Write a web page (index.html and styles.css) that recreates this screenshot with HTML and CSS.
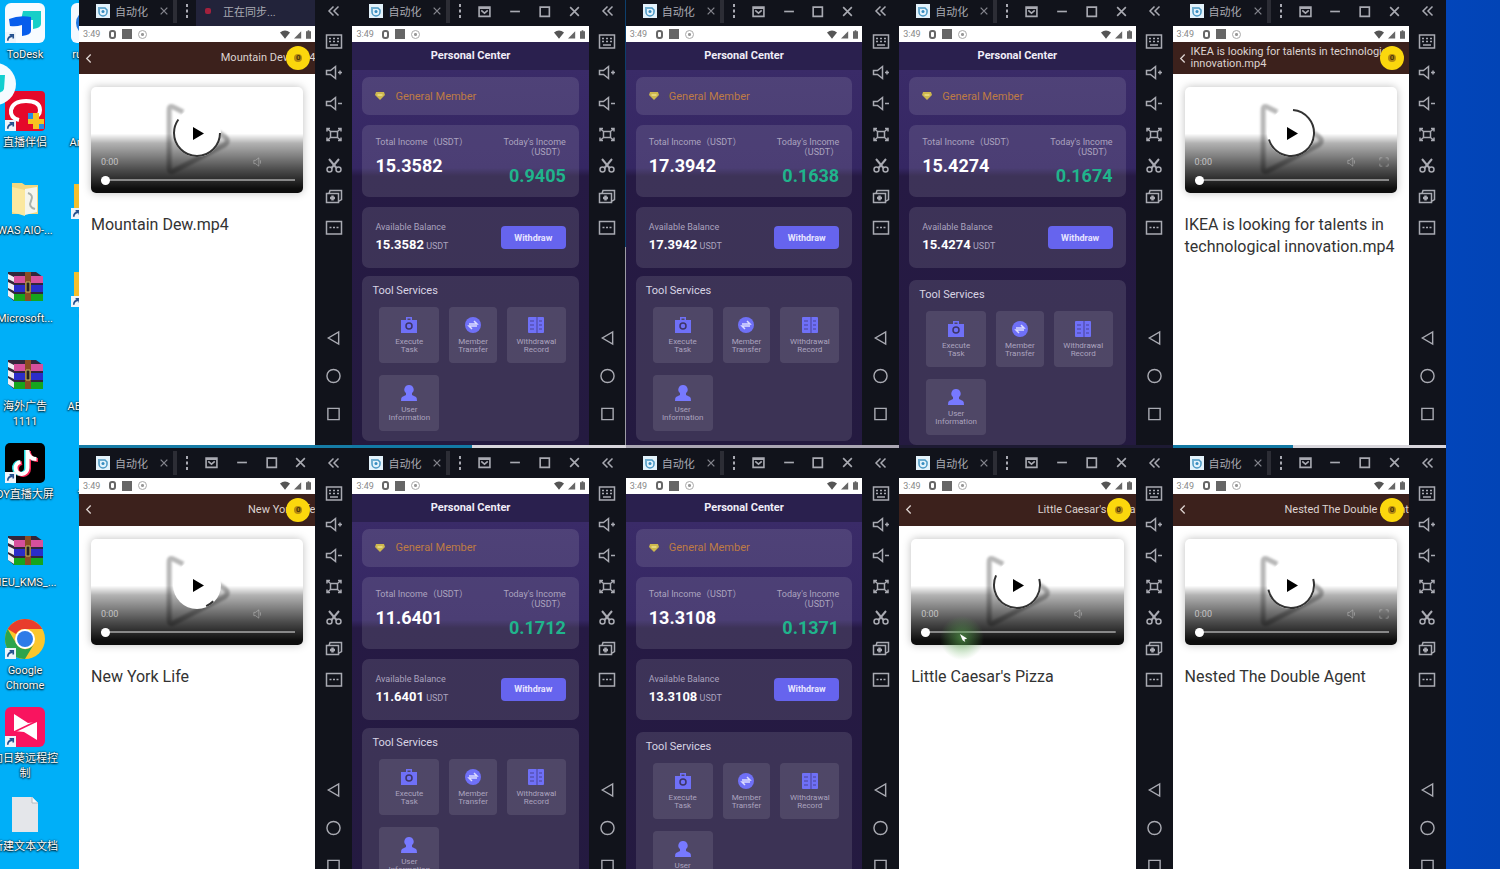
FILE: index.html
```
<!DOCTYPE html>
<html lang="en">
	<head>
		<meta charset="utf-8">
		<meta name="viewport" content="width=device-width, initial-scale=1.0">
		<title>Desktop</title>
		<link rel="stylesheet" href="styles.css">
	</head>
	<body>
		<svg class="sprite" aria-hidden="true">
			<symbol id="i-app" viewBox="0 0 14 14"><rect width="14" height="14" fill="#e3f2fb"/><path d="M4 4h5l2 2v2a4 4 0 0 1-8 0V3" fill="none" stroke="#4a98c4" stroke-width="1.500"/><circle cx="7" cy="7.500" r="1.500" fill="#358cc0"/></symbol>
			<symbol id="i-x" viewBox="0 0 12 12"><path d="M2 2l8 8M10 2l-8 8"/></symbol>
			<symbol id="i-dots" viewBox="0 0 12 16"><path d="M6 1v3M6 6.500v3M6 12v3" stroke-width="2"/></symbol>
			<symbol id="i-mail" viewBox="0 0 12 12"><path d="M1 2h10v8.500H1zM3 5l3 2.500L9 5M1 3h10"/></symbol>
			<symbol id="i-min" viewBox="0 0 12 12"><path d="M2 6h9"/></symbol>
			<symbol id="i-max" viewBox="0 0 12 12"><path d="M2 2h8.500v8.500H2z"/></symbol>
			<symbol id="i-fold" viewBox="0 0 12 12"><path d="M6 1.500L1.500 6 6 10.500M11 1.500L6.500 6l4.500 4.500"/></symbol>
			<symbol id="i-keys" viewBox="0 0 18 16"><path d="M1.500 1.500h15v13h-15zM4 5h2M8 5h2M12 5h2M4 8h2M8 8h2M12 8h2M5 11.500h8"/></symbol>
			<symbol id="i-volup" viewBox="0 0 18 16"><path d="M1.500 6h4l5-4v12l-5-4h-4zM13 8h4M15 6v4"/></symbol>
			<symbol id="i-voldn" viewBox="0 0 18 16"><path d="M1.500 6h4l5-4v12l-5-4h-4zM13 8h4"/></symbol>
			<symbol id="i-full" viewBox="0 0 18 16"><path d="M5.500 5h7v6h-7zM5.500 5L2 2M12.500 5L16 2M5.500 11L2 14M12.500 11l3.500 3M2 5V2h3M13 2h3v3M2 11v3h3M13 14h3v-3"/></symbol>
			<symbol id="i-cut" viewBox="0 0 18 16"><path d="M4 1.500l7.500 9M14 1.500l-7.500 9" stroke-width="2"/><circle cx="4.500" cy="12" r="2.500"/><circle cx="13.500" cy="12" r="2.500"/></symbol>
			<symbol id="i-apk" viewBox="0 0 18 16"><path d="M1.500 5h12v9h-12zM4 5l1-3h11.500v9l-3 2"/><path d="M7.500 7v5M5 9.500h5" stroke-width="2.500"/></symbol>
			<symbol id="i-more" viewBox="0 0 18 16"><path d="M1.500 2h15v12.500h-15zM4.500 8h2M8 8h2M11.500 8h2"/></symbol>
			<symbol id="i-back" viewBox="0 0 16 16"><path d="M13.500 1.500v13L2.500 8z"/></symbol>
			<symbol id="i-home" viewBox="0 0 16 16"><circle cx="8" cy="8" r="7"/></symbol>
			<symbol id="i-recent" viewBox="0 0 16 16"><path d="M2 2h12v12H2z"/></symbol>
			<symbol id="i-left" viewBox="0 0 8 12"><path d="M6.500 1.500L2 6l4.500 4.500"/></symbol>
			<symbol id="i-task" viewBox="0 0 18 18"><path d="M6 1h6v3h5v13H1V4h5zM7.500 2.500V4h3V2.500z" fill="#6f70f7"/><circle cx="9" cy="10" r="3" fill="none" stroke="#3d3566" stroke-width="1.500"/></symbol>
			<symbol id="i-transfer" viewBox="0 0 18 18"><circle cx="9" cy="9" r="8" fill="#6f70f7"/><path d="M5 8h8l-3-3M13 10H5l3 3" fill="none" stroke="#dcdcff" stroke-width="1.500"/></symbol>
			<symbol id="i-record" viewBox="0 0 18 18"><rect x="1" y="1" width="16" height="16" rx="1" fill="#6f70f7"/><path d="M10 1v16M3 5h4M3 9h4M3 13h4M12 5h3M12 9h3M12 13h3" stroke="#4a4395"/></symbol>
			<symbol id="i-user" viewBox="0 0 18 18"><path d="M9 1a4.500 4.500 0 0 1 3 8v2l4 2q1 .5 1 4H1q0-3.500 1-4l4-2V9a4.500 4.500 0 0 1 3-8z" fill="#7779ff"/></symbol>
			<symbol id="i-gem" viewBox="0 0 10 8"><path d="M1 0h8l1 3-5 5-5-5z" fill="#cdb84e"/><path d="M2.500 3h5" stroke="#fff3a8"/></symbol>
			<symbol id="i-wifi" viewBox="0 0 12 10"><path d="M0 2.500Q6-2 12 2.500L6 10z" fill="#555"/></symbol>
			<symbol id="i-signal" viewBox="0 0 10 10"><path d="M9 1v9H0z" fill="#666"/></symbol>
			<symbol id="i-battery" viewBox="0 0 6 10"><path d="M2 0h2v1h2v9H0V1h2z" fill="#666"/></symbol>
			<symbol id="i-shortcut" viewBox="0 0 12 12"><rect width="12" height="12" fill="#eef4fa"/><path d="M3 9.500Q3 5 8 4.500M5 3h4v4" fill="none" stroke="#24508e" stroke-width="1.800"/></symbol>
			<symbol id="d-todesk" viewBox="0 0 40 40"><rect width="40" height="40" rx="6" fill="#f7fbff"/><path d="M18 8h18v13q0 4-8 5V17H16z" fill="#18cfc8"/><path d="M4 16q10-4 22-2v14q0 4-9 5V22q-6 2-12 1z" fill="#075dec"/></symbol>
			<symbol id="d-live" viewBox="0 0 40 40"><rect width="40" height="40" rx="4" fill="#e5092a"/><path d="M14 29q-9-2-8-10 2-9 15-9 14 0 14 9 0 7-7 6" fill="none" stroke="#fff" stroke-width="4"/><path d="M28 22h6v6h5v5h-5v5h-6v-5h-5v-5h5z" fill="#f8c321"/><path d="M23 22h5v6h-5zM34 33h5v5h-5z" fill="#258fe6"/></symbol>
			<symbol id="d-folder" viewBox="0 0 40 40"><path d="M7 4h10l3 2h13v29H7z" fill="#f2d880"/><path d="M20 10l12-2v25l-12 3z" fill="#f5f5ee"/><path d="M7 8l13 3v26L7 33z" fill="#fbe8a0"/><path d="M23 14q6 2 3 8t4 8" fill="none" stroke="#aab1ac" stroke-width="2"/></symbol>
			<symbol id="d-yellow" viewBox="0 0 40 40"><path d="M3 5h15l3 4h16v26H3z" fill="#f5bf2d"/><path d="M8 9h29v26H8z" fill="#ffdc73"/></symbol>
			<symbol id="d-rar" viewBox="0 0 40 40"><path d="M3 5h28l7 5v24H9L3 29z" fill="#33263a"/><path d="M9 9h29v7H9z" fill="#d6509c"/><path d="M9 18h29v7H9z" fill="#2b2dc8"/><path d="M9 27h29v7H9z" fill="#16a51e"/><path d="M3 7l6 3v5l-6-3zM3 15l6 3v6l-6-3zM3 23l6 4v6l-6-4z" fill="#f0eef2"/><path d="M20 5h6v29h-6z" fill="#8b4d24"/><path d="M21 15h4v10h-4z" fill="#262022" stroke="#c9b65c"/></symbol>
			<symbol id="d-tiktok" viewBox="0 0 40 40"><rect width="40" height="40" rx="5"/><g fill="none" stroke-width="4"><path d="M21 7v18a6 6 0 1 1-7-6M21 9q2 7 9 7" stroke="#22dfe0"/><path d="M24 8v18a6 6 0 1 1-7-6M24 10q2 7 9 7" stroke="#fb2553"/><path d="M22.500 7v18a6 6 0 1 1-7-6M22.500 9q2 7 9 7" stroke="#fff"/></g></symbol>
			<symbol id="d-chrome" viewBox="0 0 40 40"><circle cx="20" cy="20" r="20" fill="#fbc62c"/><path d="M2.700 10A20 20 0 0 1 37.300 10H20a10 10 0 0 0-9 5z" fill="#e83c2c"/><path d="M2.700 10A20 20 0 0 0 20 40l9-15a10 10 0 0 1-17.500 0z" fill="#2da44c"/><circle cx="20" cy="20" r="10" fill="#fff"/><circle cx="20" cy="20" r="8" fill="#2d7be8"/></symbol>
			<symbol id="d-sun" viewBox="0 0 40 40"><rect width="40" height="40" rx="6" fill="#f9145f"/><path d="M9 7l14 9 9-1v18l-13-8-10-1z" fill="#fff"/><path d="M9 25l23-11" stroke="#f9145f" stroke-width="1.500"/></symbol>
			<symbol id="d-file" viewBox="0 0 40 40"><path d="M7 2h20l6 6v29H7z" fill="#e4e6ea"/><path d="M27 2v6h6" fill="#f9f9fb" stroke="#b6bac0"/></symbol>
			<symbol id="d-white" viewBox="0 0 40 40"><rect width="40" height="40" rx="6" fill="#f4f9ff"/><circle cx="18" cy="20" r="13" fill="#2278e0"/></symbol>
			<symbol id="d-none" viewBox="0 0 40 40"></symbol>
		</svg>

		<main class="desktop">
			<nav class="shortcuts" id="shortcuts" aria-label="Desktop icons"></nav>
			<div class="windows" id="windows"></div>
		</main>
		<svg class="bubble" viewBox="0 0 42 42" aria-hidden="true">
			<circle cx="21" cy="21" r="21" fill="#f4fbff"/>
			<path d="M12 12h19l-1 14q-1 4-8 4V20H12z" fill="#12cfd0"/>
		</svg>

		<script>
			// Desktop shortcuts: icon, label, has arrow badge
			const shortcuts = [
				["todesk", "ToDesk", 1], ["white", "runtime", 0],
				["live", "直播伴侣", 1], ["none", "AnyDesk", 0],
				["folder", "WAS AIO-...", 0], ["yellow", "BAK", 1],
				["rar", "Microsoft...", 0], ["yellow", "雷电", 1],
				["rar", "海外广告<br>1111", 0], ["none", "AB微信号", 0],
				["tiktok", "DY直播大屏", 1], ["none", "10-20", 0],
				["rar", "HEU_KMS_...", 0], ["none", "秒杀", 0],
				["chrome", "Google<br>Chrome", 1], ["none", "", 0],
				["sun", "向日葵远程控<br>制", 1], ["none", "", 0],
				["file", "新建文本文档", 0], ["none", "", 0]
			];

			// Emulator windows, row by row. arc = [start angle, length in %]
			const windows = [
				{ video: "Mountain Dew.mp4", arc: [0, 60], edge: "teal", sync: true },
				{ total: "15.3582", today: "0.9405", edge: "half", rule: true },
				{ total: "17.3942", today: "0.1638", edge: "grey" },
				{ total: "15.4274", today: "0.1674", edge: "dark", loose: true },
				{ video: "IKEA is looking for talents in technological innovation.mp4", arc: [-85, 69], edge: "half", full: true },
				{ video: "New York Life", arc: [45, 6], edge: "dark" },
				{ total: "11.6401", today: "0.1712", edge: "dark" },
				{ total: "13.3108", today: "0.1371", edge: "dark", loose: true },
				{ video: "Little Caesar's Pizza", arc: [-15, 61], edge: "dark", click: true },
				{ video: "Nested The Double Agent", arc: [-15, 51], edge: "dark", full: true }
			];

			const icon = (id, cls) => `<svg class="${cls}"><use href="#${id}"/></svg>`;
			const iconButton = (id, label, cls) => `<button class="${cls}" aria-label="${label}">${icon(id, "glyph")}</button>`;

			const videoScreen = (w) => `
				<header class="video-bar">
					<button class="video-back" aria-label="Back">${icon("i-left", "glyph")}</button>
					<span class="video-name">${w.video}</span>
					<span class="coin"><span class="coin-core">0</span></span>
				</header>
				<div class="video-page">
					<div class="player">
						<svg class="player-logo" viewBox="0 0 212 106">
							<path d="M92 25L82 20Q78 18 78 23V80Q78 87 84 83L133 58Q139 54 133 49L120 41"/>
						</svg>
						<div class="player-shade"></div>
						<button class="player-play" aria-label="Play">
							<svg viewBox="0 0 50 50">
								<circle cx="25" cy="25" r="24" fill="#fff"/>
								<circle cx="25" cy="25" r="23" pathLength="100" fill="none" stroke="#333" stroke-width="2" stroke-dasharray="${w.arc[1]} 100" transform="rotate(${w.arc[0]} 25 25)"/>
								<path d="M21 19v13l11-6.500z"/>
							</svg>
						</button>
						<div class="player-controls">
							<div class="player-row">
								<span>0:00</span>
								<svg class="player-mute" viewBox="0 0 12 12"><path d="M1 4h2l4-3v10L3 8H1zM9 4v4"/></svg>
								<svg class="player-full ${w.full ? "" : "hidden"}" viewBox="0 0 12 12"><path d="M1 4V1h3M8 1h3v3M11 8v3H8M4 11H1V8"/></svg>
							</div>
							<input class="seek" type="range" min="0" max="100" value="0" aria-label="Seek">
						</div>
						${w.click ? `<span class="click-glow"><svg viewBox="0 0 10 10"><path d="M1 0l8 5-3 1 1 3-3-2z" fill="#fff"/></svg></span>` : ""}
					</div>
					<h2 class="video-title">${w.video}</h2>
				</div>`;

			const tool = (id, a, b) => `<button class="tool">${icon(id, "tool-icon")}<span>${a}<br>${b}</span></button>`;

			const accountScreen = (w) => `
				<header class="account-bar">Personal Center</header>
				<div class="account-page">
					<section class="card member">${icon("i-gem", "gem")}<span>General Member</span></section>
					<section class="card income">
						<div>
							<p class="label">Total Income（USDT）</p>
							<p class="total">${w.total}</p>
						</div>
						<div class="today">
							<p class="label">Today's Income<br>（USDT）</p>
							<p class="today-value">${w.today}</p>
						</div>
					</section>
					<section class="card balance">
						<div>
							<p class="label">Available Balance</p>
							<p class="amount"><b>${w.total}</b> USDT</p>
						</div>
						<button class="withdraw">Withdraw</button>
					</section>
					<section class="card tools ${w.loose ? "loose" : ""}">
						<h2 class="tools-title">Tool Services</h2>
						<div class="tools-grid">
							${tool("i-task", "Execute", "Task")}
							${tool("i-transfer", "Member", "Transfer")}
							${tool("i-record", "Withdrawal", "Record")}
							${tool("i-user", "User", "Information")}
						</div>
					</section>
				</div>`;

			const emulator = (w) => `
				<section class="window edge-${w.edge} ${w.rule ? "side-rule" : ""}">
					<header class="titlebar">
						<span class="tab">${icon("i-app", "tab-icon")}<span>自动化</span>${iconButton("i-x", "Close tab", "tab-close")}</span>
						${iconButton("i-dots", "Menu", "tb-dots")}
						${w.sync
							? `<span class="sync"><i class="sync-mark"></i>正在同步...</span>`
							: `<span class="tb-buttons">
								${iconButton("i-mail", "Messages", "tb-button")}
								${iconButton("i-min", "Minimize", "tb-button")}
								${iconButton("i-max", "Maximize", "tb-button")}
								${iconButton("i-x", "Close", "tb-button")}
							</span>`}
						${iconButton("i-fold", "Collapse", "tb-fold")}
					</header>
					<div class="window-body">
						<div class="screen">
							<div class="status">
								<span class="clock">3:49</span>
								<i class="st-round"></i><i class="st-square"></i><i class="st-ring"></i>
								<span class="status-right">${icon("i-wifi", "st-wifi")}${icon("i-signal", "st-signal")}${icon("i-battery", "st-battery")}</span>
							</div>
							${w.video ? videoScreen(w) : accountScreen(w)}
						</div>
						<aside class="sidebar">
							${iconButton("i-keys", "Keyboard", "side-button")}
							${iconButton("i-volup", "Volume up", "side-button")}
							${iconButton("i-voldn", "Volume down", "side-button")}
							${iconButton("i-full", "Full screen", "side-button")}
							${iconButton("i-cut", "Screenshot", "side-button")}
							${iconButton("i-apk", "Install", "side-button")}
							${iconButton("i-more", "More", "side-button")}
							<div class="side-nav">
								${iconButton("i-back", "Back", "nav-button")}
								${iconButton("i-home", "Home", "nav-button")}
								${iconButton("i-recent", "Recent", "nav-button")}
							</div>
						</aside>
					</div>
				</section>`;

			document.getElementById("shortcuts").innerHTML = shortcuts.map(([id, label, arrow]) => `
				<a class="shortcut" href="#">
					<span class="shortcut-art">${icon("d-" + id, "shortcut-icon")}${arrow ? icon("i-shortcut", "shortcut-arrow") : ""}</span>
					<span class="shortcut-label">${label}</span>
				</a>`).join("");
			document.getElementById("windows").innerHTML = windows.map(emulator).join("");
		</script>
	</body>
</html>
```
FILE: styles.css
```
* {
	box-sizing: border-box;
}
body {
	margin: 0;
	height: 100vh;
	overflow: hidden;
	font-family: Roboto, "Noto Sans CJK SC", sans-serif;
	background: linear-gradient(to right, #00aff8 0, #00aff8 60%, #0248c2 90%, #0244b6 100%);
}
button {
	display: flex;
	align-items: center;
	justify-content: center;
	padding: 0;
	border: 0;
	background: none;
	color: inherit;
	font: inherit;
	cursor: pointer;
}
h2, p {
	margin: 0;
}
.sprite {
	display: none;
}
.glyph {
	width: 100%;
	height: 100%;
	fill: none;
	stroke: currentColor;
	stroke-width: 1.5;
}
.desktop {
	display: flex;
	height: 100vh;
	padding-right: 54px;
	overflow: hidden;
}

/* desktop shortcuts */
.shortcuts {
	flex: none;
	width: 79px;
	padding-top: 3px;
	display: grid;
	grid-template-columns: 66px 66px;
	grid-auto-rows: 88px;
	overflow: hidden;
}
.shortcut {
	margin-left: -16px;
	display: flex;
	flex-direction: column;
	align-items: center;
	gap: 4px;
	color: #fff;
	text-decoration: none;
}
.shortcut-art {
	position: relative;
	height: 40px;
}
.shortcut-icon {
	width: 40px;
	height: 40px;
}
.shortcut-arrow {
	position: absolute;
	left: 0;
	bottom: 0;
	width: 11px;
	height: 11px;
}
.shortcut-label {
	font-size: 11px;
	line-height: 15px;
	text-align: center;
	white-space: nowrap;
	text-shadow: 0 1px 2px #000, 0 0 2px #000;
}
.bubble {
	position: absolute;
	left: -26px;
	top: 63px;
	width: 42px;
	height: 42px;
}

/* emulator windows */
.windows {
	flex: 1;
	margin-top: -4px;
	display: grid;
	grid-template-columns: repeat(5, 1fr);
	grid-auto-rows: 52vh;
}
.window {
	position: relative;
	min-width: 0;
	display: flex;
	flex-direction: column;
	background: #11131b;
	border-bottom: 3px solid #1d1a33;
	color: #a9aab2;
}
.edge-teal {
	border-bottom-color: #167ca6;
}
.edge-half {
	border-image: linear-gradient(to right, #1279a4 44%, #d8d6dc 44%) 3;
	border-width: 0 0 3px;
}
.edge-grey {
	border-bottom-color: #aaa6b3;
}
.side-rule::after {
	content: "";
	position: absolute;
	top: 0;
	right: 0;
	bottom: 0;
	width: 1px;
	background: linear-gradient(#0d3f6c 56%, #9c9ba4 56%);
}
.titlebar {
	flex: none;
	height: 30px;
	display: flex;
	align-items: center;
}
.tab {
	width: 98px;
	height: 24px;
	padding-left: 17px;
	display: flex;
	align-items: center;
	gap: 5px;
	border-right: 4px solid #2c2d35;
	font-size: 11px;
}
.tab-icon {
	width: 14px;
	height: 14px;
}
.tab-close {
	width: 10px;
	height: 10px;
	margin-left: 6px;
	color: #85868e;
}
.tb-dots {
	width: 12px;
	height: 16px;
	margin-left: 4px;
}
.tb-buttons {
	flex: 1;
	display: flex;
	justify-content: space-between;
	padding: 0 8px 0 12px;
}
.tb-button {
	width: 13px;
	height: 13px;
}
.sync {
	flex: 1;
	align-self: stretch;
	margin-left: 3px;
	padding-left: 9px;
	display: flex;
	align-items: center;
	gap: 12px;
	background: #22233a;
	font-size: 11px;
}
.sync-mark {
	width: 6px;
	height: 6px;
	border-radius: 2px;
	background: #a3213d;
}
.tb-fold {
	width: 37px;
	height: 12px;
}
.window-body {
	flex: 1;
	min-height: 0;
	display: flex;
}
.screen {
	flex: 1;
	min-width: 0;
	display: flex;
	flex-direction: column;
	overflow: hidden;
	background: #fff;
}
.sidebar {
	flex: none;
	width: 37px;
	display: flex;
	flex-direction: column;
	align-items: center;
	padding-bottom: 12px;
}
.side-button {
	width: 18px;
	height: 31px;
}
.side-nav {
	margin-top: auto;
}
.nav-button {
	width: 15px;
	height: 38px;
}

/* android status bar */
.status {
	flex: none;
	height: 16px;
	padding: 0 4px;
	display: flex;
	align-items: center;
	gap: 6px;
	background: #fff;
	color: #888;
	font-size: 9px;
}
.clock {
	width: 20px;
}
.st-round {
	width: 7px;
	height: 9px;
	border-radius: 3px;
	border: 2px solid #666;
}
.st-square {
	width: 10px;
	height: 10px;
	background: #666;
}
.st-ring {
	width: 9px;
	height: 9px;
	border-radius: 50%;
	border: 1px solid #aaa;
	background: radial-gradient(#999 25%, transparent 35%);
}
.status-right {
	margin-left: auto;
	display: flex;
	gap: 4px;
}
.st-wifi {
	width: 10px;
	height: 9px;
}
.st-signal {
	width: 8px;
	height: 9px;
}
.st-battery {
	width: 5px;
	height: 9px;
}

/* video screen */
.video-bar {
	position: relative;
	flex: none;
	height: 32px;
	padding-left: 6px;
	display: flex;
	align-items: center;
	background: #3c211c;
	color: #ddd3d0;
}
.video-back {
	flex: none;
	width: 7px;
	height: 11px;
	margin-right: 5px;
}
.video-name {
	margin-left: auto;
	font-size: 11px;
	line-height: 12px;
}
.coin {
	position: absolute;
	right: 5px;
	top: 4px;
	width: 24px;
	height: 24px;
	border-radius: 50%;
	display: flex;
	align-items: center;
	justify-content: center;
	background: #fbd70d;
}
.coin-core {
	width: 8px;
	height: 8px;
	border-radius: 50%;
	background: #b58a12;
	color: #4a3508;
	font-size: 8px;
	font-weight: bold;
	line-height: 8px;
	text-align: center;
}
.video-page {
	padding: 13px 12px;
}
.player {
	position: relative;
	aspect-ratio: 2;
	border-radius: 5px;
	background: #fff;
	box-shadow: 0 0 8px rgba(0, 0, 0, 0.25);
}
.player-logo {
	position: absolute;
	width: 100%;
	height: 100%;
	fill: none;
	stroke: #b8b8b8;
	stroke-width: 5;
	filter: blur(1px);
}
.player-shade {
	position: absolute;
	inset: 0;
	border-radius: 5px;
	background: linear-gradient(transparent 44%, rgba(0, 0, 0, 0.3) 53%, rgba(0, 0, 0, 0.7) 78%, rgba(0, 0, 0, 0.95) 96%);
}
.player-play {
	position: absolute;
	left: 50%;
	top: 43%;
	width: 50px;
	height: 50px;
	transform: translate(-50%, -50%);
}
.player-controls {
	position: absolute;
	left: 10px;
	right: 8px;
	bottom: 8px;
}
.player-row {
	display: flex;
	align-items: center;
	color: rgba(255, 255, 255, 0.6);
	font-size: 9px;
}
.player-mute, .player-full {
	width: 10px;
	height: 10px;
	fill: none;
	stroke: rgba(255, 255, 255, 0.35);
}
.player-mute {
	margin-left: auto;
	margin-right: 22px;
}
.hidden {
	visibility: hidden;
}
.seek {
	display: block;
	width: 100%;
	height: 10px;
	margin: 8px 0 0;
	appearance: none;
	background: linear-gradient(#888, #888) center / 100% 2px no-repeat;
}
.seek::-webkit-slider-thumb {
	appearance: none;
	width: 9px;
	height: 9px;
	border-radius: 50%;
	background: #fff;
}
.click-glow {
	position: absolute;
	left: 28px;
	bottom: -16px;
	width: 46px;
	height: 46px;
	border-radius: 50%;
	padding: 19px 0 0 20px;
	background: radial-gradient(rgba(90, 170, 80, 0.65), rgba(110, 190, 100, 0) 68%);
}
.click-glow svg {
	display: block;
	width: 9px;
	height: 9px;
}
.video-title {
	margin-top: 21px;
	color: #333;
	font-size: 16px;
	font-weight: normal;
	line-height: 22px;
}

/* account screen */
.account-bar {
	flex: none;
	height: 28px;
	background: #2a204e;
	color: #f0edf8;
	font-size: 11px;
	font-weight: bold;
	line-height: 28px;
	text-align: center;
}
.account-page {
	flex: 1;
	padding: 7px 10px 4px;
	display: flex;
	flex-direction: column;
	gap: 10px;
	background: linear-gradient(#3a2b68 0, #352763 98px, #261a44 106px, #241a40 100%);
}
.card {
	padding: 0 13px;
	border-radius: 7px;
	background: rgba(255, 255, 255, 0.11);
	color: #aba3bf;
}
.member {
	height: 38px;
	display: flex;
	align-items: center;
	gap: 10px;
	color: #bd7b45;
	font-size: 11px;
}
.gem {
	width: 10px;
	height: 8px;
}
.income {
	height: 72px;
	padding-top: 12px;
	display: flex;
	justify-content: space-between;
}
.label {
	font-size: 9px;
	line-height: 10px;
}
.total {
	margin-top: 8px;
	color: #fff;
	font-size: 18px;
	font-weight: bold;
	line-height: 22px;
}
.today {
	text-align: right;
}
.today-value {
	margin-top: 8px;
	color: #20b48c;
	font-size: 18px;
	font-weight: bold;
	line-height: 22px;
}
.balance {
	height: 61px;
	display: flex;
	align-items: center;
	justify-content: space-between;
}
.amount {
	margin-top: 6px;
	font-size: 9px;
	line-height: 14px;
}
.amount b {
	color: #fff;
	font-size: 13px;
	font-weight: bold;
}
.withdraw {
	width: 65px;
	height: 23px;
	border-radius: 4px;
	background: #6664ee;
	color: #e6e5ff;
	font-size: 9px;
	font-weight: bold;
}
.tools {
	flex: 1;
	padding: 7px 13px 10px 10px;
	margin-top: -2px;
}
.loose {
	margin-top: 2px;
}
.tools-title {
	color: #d8d3e4;
	font-size: 11px;
	font-weight: normal;
	line-height: 16px;
}
.tools-grid {
	margin-top: 8px;
	padding-left: 7px;
	display: grid;
	grid-template-columns: 60fr 48fr 59fr;
	gap: 12px 10px;
}
.tool {
	height: 56px;
	flex-direction: column;
	gap: 4px;
	border-radius: 4px;
	background: rgba(255, 255, 255, 0.1);
	font-size: 8px;
	line-height: 8px;
}
.tool-icon {
	width: 18px;
	height: 18px;
}
```
